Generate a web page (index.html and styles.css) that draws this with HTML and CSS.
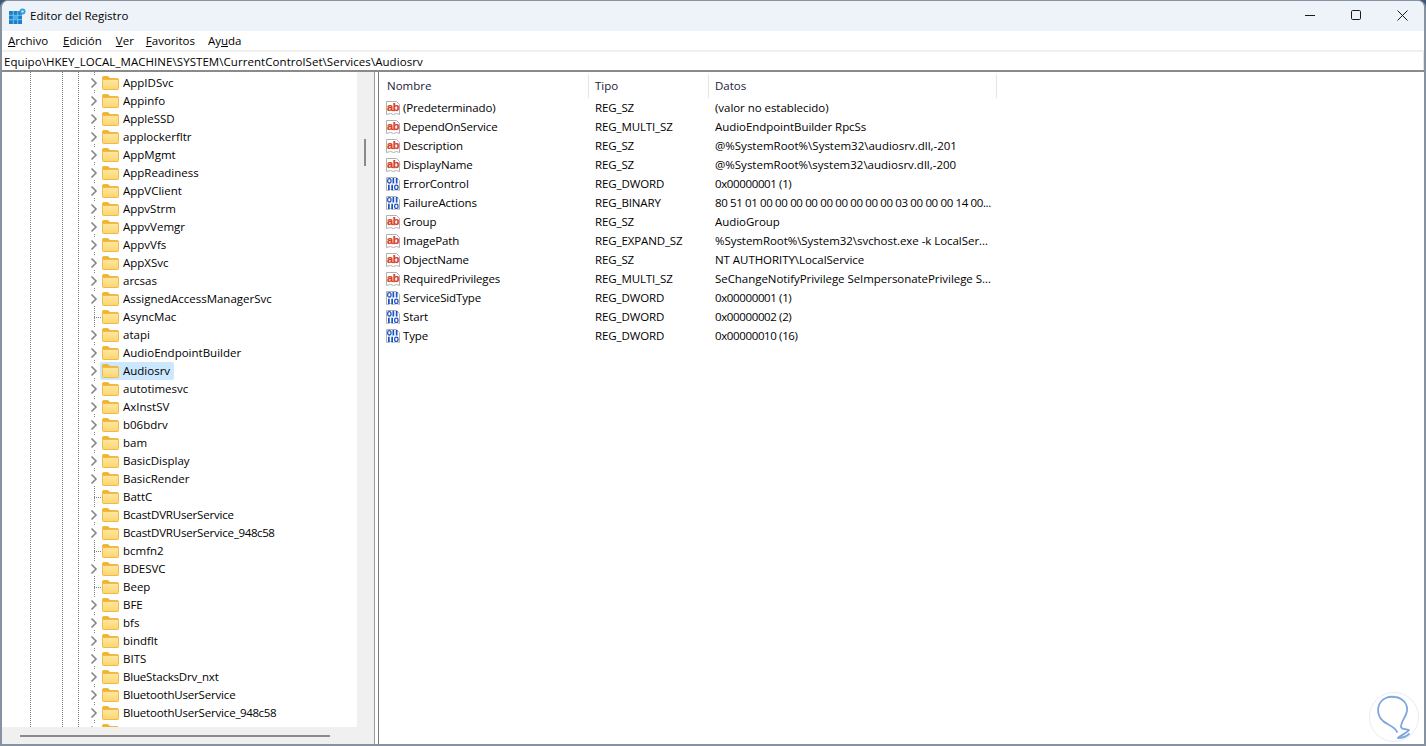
FILE: index.html
```html
<!DOCTYPE html>
<html lang="es">
<head>
<meta charset="utf-8">
<title>Editor del Registro</title>
<link rel="stylesheet" href="styles.css">
</head>
<body>
<svg class="defs" aria-hidden="true">
  <defs>
    <linearGradient id="fbody" x1="0" y1="0" x2="0" y2="1">
      <stop offset="0" stop-color="#ffe7a3"/>
      <stop offset="1" stop-color="#fbd56f"/>
    </linearGradient>
  </defs>
  <symbol id="folder" viewBox="0 0 17 14">
    <path d="M.5 3.500V1.600C.5 1 1 .5 1.600.5h4.400l2 2h7.400c.6 0 1.100.5 1.100 1.100v2H.5z" fill="#f4b324" stroke="#eaa51c" stroke-width=".6"/>
    <rect x=".5" y="3.500" width="16" height="10" rx=".8" fill="url(#fbody)" stroke="#f0bb45"/>
  </symbol>
  <symbol id="chev" viewBox="0 0 8 12">
    <path d="M1.500 1.500 6 6l-4.500 4.500" fill="none" stroke="#858585" stroke-width="1.600"/>
  </symbol>
  <symbol id="doc" viewBox="0 0 16 16">
    <path d="M1.500 1.500h10l3 3v10l-3-1-3 1-3-1-4 1z" fill="#fff" stroke="#b0b0b0"/>
  </symbol>
  <symbol id="bin" viewBox="0 0 16 16">
    <path d="M1.500 1.500h10l3 3v10l-3-1-3 1-3-1-4 1z" fill="#fff" stroke="#b0b0b0"/>
    <rect x="2.700" y="2.700" width="3.300" height="4.300" rx="1.500" fill="none" stroke="#1b52c2" stroke-width="1.300"/>
    <rect x="7.500" y="2" width="1.700" height="5.500" fill="#1b52c2"/>
    <rect x="10.800" y="2" width="1.700" height="5.500" fill="#1b52c2"/>
    <rect x="3" y="8.700" width="1.700" height="5.500" fill="#1b52c2"/>
    <rect x="6.300" y="8.700" width="1.700" height="5.500" fill="#1b52c2"/>
    <rect x="9.700" y="9.200" width="3.300" height="4.300" rx="1.500" fill="none" stroke="#1b52c2" stroke-width="1.300"/>
  </symbol>
</svg>

<div class="window">
  <header class="titlebar">
    <svg class="app-icon" width="17" height="17" viewBox="0 0 17 17">
      <rect x="0" y="3" width="13" height="13" fill="#1b7fc9"/>
      <path d="M4.300 3v13M8.700 3v13M0 7.300h13M0 11.700h13" stroke="#8fd0f2" stroke-width=".8"/>
      <rect x="4.700" y="7.700" width="3.600" height="3.600" fill="#43b0ea"/>
      <circle cx="13.500" cy="3.500" r="3" fill="#2f9be0"/>
      <circle cx="13.500" cy="3.500" r="1.200" fill="#bfe6fa"/>
    </svg>
    <span class="title-text">Editor del Registro</span>
    <div class="controls">
      <svg class="ctl" width="46" height="30" viewBox="-1 0 46 30"><path d="M18 14.500h10" stroke="#1a1a1a"/></svg>
      <svg class="ctl" width="46" height="30" viewBox="-1 0 46 30"><rect x="18.500" y="9.500" width="9" height="9" rx="1.200" fill="none" stroke="#1a1a1a"/></svg>
      <svg class="ctl" width="46" height="30" viewBox="-1 0 46 30"><path d="M18.500 9.500l10 10M28.500 9.500l-10 10" stroke="#1a1a1a"/></svg>
    </div>
  </header>

  <nav class="menubar">
    <span class="menu m-archivo"><u>A</u>rchivo</span>
    <span class="menu m-edicion"><u>E</u>dición</span>
    <span class="menu m-ver"><u>V</u>er</span>
    <span class="menu m-fav"><u>F</u>avoritos</span>
    <span class="menu">Ay<u>u</u>da</span>
  </nav>

  <div class="address">Equipo\HKEY_LOCAL_MACHINE\SYSTEM\CurrentControlSet\Services\Audiosrv</div>

  <main class="panes">
    <section class="left">
      <div class="left-top">
        <div class="tree">
          <div class="row"><svg class="chev"><use href="#chev"/></svg><svg class="folder"><use href="#folder"/></svg><span class="label">AppIDSvc</span></div>
          <div class="row"><svg class="chev"><use href="#chev"/></svg><svg class="folder"><use href="#folder"/></svg><span class="label">Appinfo</span></div>
          <div class="row"><svg class="chev"><use href="#chev"/></svg><svg class="folder"><use href="#folder"/></svg><span class="label">AppleSSD</span></div>
          <div class="row"><svg class="chev"><use href="#chev"/></svg><svg class="folder"><use href="#folder"/></svg><span class="label">applockerfltr</span></div>
          <div class="row"><svg class="chev"><use href="#chev"/></svg><svg class="folder"><use href="#folder"/></svg><span class="label">AppMgmt</span></div>
          <div class="row"><svg class="chev"><use href="#chev"/></svg><svg class="folder"><use href="#folder"/></svg><span class="label">AppReadiness</span></div>
          <div class="row"><svg class="chev"><use href="#chev"/></svg><svg class="folder"><use href="#folder"/></svg><span class="label">AppVClient</span></div>
          <div class="row"><svg class="chev"><use href="#chev"/></svg><svg class="folder"><use href="#folder"/></svg><span class="label">AppvStrm</span></div>
          <div class="row"><svg class="chev"><use href="#chev"/></svg><svg class="folder"><use href="#folder"/></svg><span class="label">AppvVemgr</span></div>
          <div class="row"><svg class="chev"><use href="#chev"/></svg><svg class="folder"><use href="#folder"/></svg><span class="label">AppvVfs</span></div>
          <div class="row"><svg class="chev"><use href="#chev"/></svg><svg class="folder"><use href="#folder"/></svg><span class="label">AppXSvc</span></div>
          <div class="row"><svg class="chev"><use href="#chev"/></svg><svg class="folder"><use href="#folder"/></svg><span class="label">arcsas</span></div>
          <div class="row"><svg class="chev"><use href="#chev"/></svg><svg class="folder"><use href="#folder"/></svg><span class="label">AssignedAccessManagerSvc</span></div>
          <div class="row"><span class="leaf"></span><svg class="folder"><use href="#folder"/></svg><span class="label">AsyncMac</span></div>
          <div class="row"><svg class="chev"><use href="#chev"/></svg><svg class="folder"><use href="#folder"/></svg><span class="label">atapi</span></div>
          <div class="row"><svg class="chev"><use href="#chev"/></svg><svg class="folder"><use href="#folder"/></svg><span class="label">AudioEndpointBuilder</span></div>
          <div class="row selected"><svg class="chev"><use href="#chev"/></svg><span class="sel"><svg class="folder"><use href="#folder"/></svg><span class="label">Audiosrv</span></span></div>
          <div class="row"><svg class="chev"><use href="#chev"/></svg><svg class="folder"><use href="#folder"/></svg><span class="label">autotimesvc</span></div>
          <div class="row"><svg class="chev"><use href="#chev"/></svg><svg class="folder"><use href="#folder"/></svg><span class="label">AxInstSV</span></div>
          <div class="row"><svg class="chev"><use href="#chev"/></svg><svg class="folder"><use href="#folder"/></svg><span class="label">b06bdrv</span></div>
          <div class="row"><svg class="chev"><use href="#chev"/></svg><svg class="folder"><use href="#folder"/></svg><span class="label">bam</span></div>
          <div class="row"><svg class="chev"><use href="#chev"/></svg><svg class="folder"><use href="#folder"/></svg><span class="label">BasicDisplay</span></div>
          <div class="row"><svg class="chev"><use href="#chev"/></svg><svg class="folder"><use href="#folder"/></svg><span class="label">BasicRender</span></div>
          <div class="row"><span class="leaf"></span><svg class="folder"><use href="#folder"/></svg><span class="label">BattC</span></div>
          <div class="row"><svg class="chev"><use href="#chev"/></svg><svg class="folder"><use href="#folder"/></svg><span class="label tight">BcastDVRUserService</span></div>
          <div class="row"><svg class="chev"><use href="#chev"/></svg><svg class="folder"><use href="#folder"/></svg><span class="label tight">BcastDVRUserService<span class="dg">_948c58</span></span></div>
          <div class="row"><span class="leaf"></span><svg class="folder"><use href="#folder"/></svg><span class="label">bcmfn2</span></div>
          <div class="row"><svg class="chev"><use href="#chev"/></svg><svg class="folder"><use href="#folder"/></svg><span class="label">BDESVC</span></div>
          <div class="row"><span class="leaf"></span><svg class="folder"><use href="#folder"/></svg><span class="label">Beep</span></div>
          <div class="row"><svg class="chev"><use href="#chev"/></svg><svg class="folder"><use href="#folder"/></svg><span class="label">BFE</span></div>
          <div class="row"><svg class="chev"><use href="#chev"/></svg><svg class="folder"><use href="#folder"/></svg><span class="label">bfs</span></div>
          <div class="row"><svg class="chev"><use href="#chev"/></svg><svg class="folder"><use href="#folder"/></svg><span class="label">bindflt</span></div>
          <div class="row"><svg class="chev"><use href="#chev"/></svg><svg class="folder"><use href="#folder"/></svg><span class="label">BITS</span></div>
          <div class="row"><svg class="chev"><use href="#chev"/></svg><svg class="folder"><use href="#folder"/></svg><span class="label tight">BlueStacksDrv_nxt</span></div>
          <div class="row"><svg class="chev"><use href="#chev"/></svg><svg class="folder"><use href="#folder"/></svg><span class="label tight">BluetoothUserService</span></div>
          <div class="row"><svg class="chev"><use href="#chev"/></svg><svg class="folder"><use href="#folder"/></svg><span class="label tight">BluetoothUserService<span class="dg">_948c58</span></span></div>
          <div class="row"><svg class="chev"><use href="#chev"/></svg><svg class="folder"><use href="#folder"/></svg></div>
        </div>
        <div class="vscroll"><div class="vthumb"></div></div>
      </div>
      <div class="hscroll"><div class="hthumb"></div></div>
    </section>

    <div class="splitter"></div>

    <section class="right">
      <div class="list-head">
        <div class="col-name">Nombre</div>
        <div class="col-type">Tipo</div>
        <div class="col-data">Datos</div>
      </div>
      <div class="item"><svg class="ico"><use href="#doc"/><text x="2" y="10.500" class="ab-text">ab</text></svg><span class="n">(Predeterminado)</span><span class="t">REG_SZ</span><span class="d">(valor no establecido)</span></div>
      <div class="item"><svg class="ico"><use href="#doc"/><text x="2" y="10.500" class="ab-text">ab</text></svg><span class="n">DependOnService</span><span class="t">REG_MULTI_SZ</span><span class="d">AudioEndpointBuilder RpcSs</span></div>
      <div class="item"><svg class="ico"><use href="#doc"/><text x="2" y="10.500" class="ab-text">ab</text></svg><span class="n">Description</span><span class="t">REG_SZ</span><span class="d wide">@%SystemRoot%\System32\audiosrv.dll,-201</span></div>
      <div class="item"><svg class="ico"><use href="#doc"/><text x="2" y="10.500" class="ab-text">ab</text></svg><span class="n">DisplayName</span><span class="t">REG_SZ</span><span class="d wide">@%SystemRoot%\system32\audiosrv.dll,-200</span></div>
      <div class="item"><svg class="ico"><use href="#bin"/></svg><span class="n">ErrorControl</span><span class="t">REG_DWORD</span><span class="d dg">0x00000001 (1)</span></div>
      <div class="item"><svg class="ico"><use href="#bin"/></svg><span class="n">FailureActions</span><span class="t">REG_BINARY</span><span class="d dg">80 51 01 00 00 00 00 00 00 00 00 00 03 00 00 00 14 00...</span></div>
      <div class="item"><svg class="ico"><use href="#doc"/><text x="2" y="10.500" class="ab-text">ab</text></svg><span class="n">Group</span><span class="t">REG_SZ</span><span class="d">AudioGroup</span></div>
      <div class="item"><svg class="ico"><use href="#doc"/><text x="2" y="10.500" class="ab-text">ab</text></svg><span class="n">ImagePath</span><span class="t">REG_EXPAND_SZ</span><span class="d">%SystemRoot%\System32\svchost.exe -k LocalSer...</span></div>
      <div class="item"><svg class="ico"><use href="#doc"/><text x="2" y="10.500" class="ab-text">ab</text></svg><span class="n">ObjectName</span><span class="t">REG_SZ</span><span class="d">NT AUTHORITY\LocalService</span></div>
      <div class="item"><svg class="ico"><use href="#doc"/><text x="2" y="10.500" class="ab-text">ab</text></svg><span class="n">RequiredPrivileges</span><span class="t">REG_MULTI_SZ</span><span class="d">SeChangeNotifyPrivilege SeImpersonatePrivilege S...</span></div>
      <div class="item"><svg class="ico"><use href="#bin"/></svg><span class="n">ServiceSidType</span><span class="t">REG_DWORD</span><span class="d dg">0x00000001 (1)</span></div>
      <div class="item"><svg class="ico"><use href="#bin"/></svg><span class="n">Start</span><span class="t">REG_DWORD</span><span class="d dg">0x00000002 (2)</span></div>
      <div class="item"><svg class="ico"><use href="#bin"/></svg><span class="n">Type</span><span class="t">REG_DWORD</span><span class="d dg">0x00000010 (16)</span></div>
    </section>
  </main>

  <svg class="watermark" width="50" height="50" viewBox="0 0 50 50">
    <circle cx="25" cy="25" r="24.500" fill="#fff" stroke="#e6ecf6"/>
    <path d="M28 40C26 34 18 33 14 29 9 25 8 18 10 13 13 6 20 4 26 5c8 1 13 7 12 14-1 6-6 10-6 16 0 2 4 2 8 3-2 3-8 5-11 8 4 0 9-2 11-4" fill="none" stroke="#7fa6de" stroke-width="1.800" stroke-linecap="round" stroke-linejoin="round"/>
  </svg>
</div>
</body>
</html>
```
FILE: styles.css
```css
* { box-sizing: border-box; }
html, body { margin: 0; height: 100%; background: #3b5876; overflow: hidden; }
body { font-family: "Open Sans", "Noto Sans", sans-serif; font-size: 11.5px; color: #000; }
.defs { position: absolute; width: 0; height: 0; }
.ab-text { font-family: "Liberation Sans", sans-serif; font-weight: 700; font-size: 11px; letter-spacing: -.3px; fill: #d8401f; stroke: #d8401f; stroke-width: .25px; }

.window {
  position: relative;
  width: 1426px;
  height: 746px;
  display: flex;
  flex-direction: column;
  background: #f0f0f0;
  border: 2px solid #8792a0;
  border-top-width: 1px;
  border-radius: 8px 8px 0 0;
  overflow: hidden;
}

.titlebar { height: 30px; flex: none; display: flex; align-items: center; background: #eef3fa; padding-left: 7px; }
.app-icon { flex: none; margin-right: 4px; }
.title-text { font-size: 11.500px; margin-bottom: 1px; }
.controls { margin-left: auto; display: flex; }
.ctl { display: block; }

.menubar { height: 19px; flex: none; display: flex; align-items: center; background: #fff; padding-left: 6px; }
.menu { font-size: 11.500px; }
.m-archivo { margin-right: 15px; }
.m-edicion { margin-right: 14px; }
.m-ver { margin-right: 12px; }
.m-fav { margin-right: 13px; }

.address { height: 18px; flex: none; margin-top: 2px; background: #fff; padding-left: 2px; line-height: 20px; font-size: 11.500px; letter-spacing: .06px; border-right: 1px solid #e4e4e4; white-space: nowrap; overflow: hidden; }

.panes { flex: 1; min-height: 0; display: flex; border-top: 2px solid #8a8a8a; }
.left { width: 372px; flex: none; display: flex; flex-direction: column; background: #f0f0f0; }
.left-top { flex: 1; min-height: 0; display: flex; }

.tree {
  flex: 1;
  min-width: 0;
  overflow: hidden;
  padding-top: 2px;
  background-color: #fff;
  background-image:
    linear-gradient(#808080 50%, transparent 50%),
    linear-gradient(#808080 50%, transparent 50%),
    linear-gradient(#808080 50%, transparent 50%),
    linear-gradient(#808080 50%, transparent 50%);
  background-size: 1px 2px;
  background-repeat: repeat-y;
  background-position: 28px 0, 60px 0, 76px 0, 92px 0;
}
.row { height: 18px; display: flex; align-items: center; padding-left: 88px; white-space: nowrap; }
.chev { width: 8px; height: 12px; flex: none; background: #fff; margin-right: 4px; box-shadow: 0 0 0 1px #fff; }
.leaf { width: 12px; height: 1px; flex: none; background-image: linear-gradient(90deg, #808080 50%, transparent 50%); background-size: 2px 1px; margin-left: 4px; margin-right: -4px; }
.folder { width: 17px; height: 14px; flex: none; margin-right: 4px; }
.label { font-size: 11.500px; margin-bottom: 2px; }
.tight { letter-spacing: -.18px; }
.dg { letter-spacing: -.4px; }
.sel { display: flex; align-items: center; height: 18px; background: #cce8ff; margin-left: -2px; padding-left: 2px; padding-right: 4px; border-radius: 2px; }

.vscroll { width: 17px; flex: none; padding-top: 67px; background: #f0f0f0; }
.vthumb { width: 2px; height: 27px; margin-left: 7px; background: #8a8a8a; }
.hscroll { height: 17px; flex: none; display: flex; align-items: center; padding-left: 18px; background: #f0f0f0; }
.hthumb { width: 310px; height: 2px; background: #8a8a8a; }

.splitter { width: 5px; flex: none; background: #fff; border-left: 1px solid #9a9a9a; border-right: 1px solid #7a7a7a; }

.right { flex: 1; min-width: 0; background: #fff; }
.list-head { height: 26px; display: flex; padding-top: 2px; }
.list-head > div { height: 24px; line-height: 24px; font-size: 11.500px; color: #1a1a3a; border-right: 1px solid #e5e5e5; }
.col-name { width: 210px; padding-left: 8px; }
.col-type { width: 120px; padding-left: 6px; }
.col-data { width: 288px; padding-left: 6px; }

.item { height: 19px; display: flex; align-items: center; white-space: nowrap; padding-left: 6px; font-size: 11.500px; }
.ico { width: 16px; height: 16px; flex: none; margin-right: 2px; }
.n { width: 192px; flex: none; letter-spacing: -.13px; margin-bottom: 1px; }
.t { width: 120px; flex: none; letter-spacing: -.12px; margin-bottom: 1px; }
.d { flex: none; letter-spacing: -.05px; margin-bottom: 1px; }
.d.dg { letter-spacing: -.37px; }
.d.wide { letter-spacing: 0; }

.watermark { position: absolute; right: 5px; bottom: 2px; }
```
